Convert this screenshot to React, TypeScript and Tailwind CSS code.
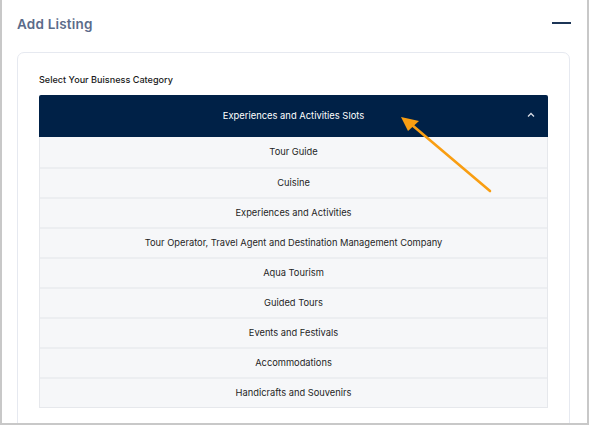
import React from "react";

const items = [
  "Tour Guide",
  "Cuisine",
  "Experiences and Activities",
  "Tour Operator, Travel Agent and Destination Management Company",
  "Aqua Tourism",
  "Guided Tours",
  "Events and Festivals",
  "Accommodations",
  "Handicrafts and Souvenirs",
];

export default function App() {
  return (
    <div
      className="relative w-[589px] h-[425px] bg-white border-l-2 border-r-2 border-b-2 border-[#c8c8c8] overflow-hidden"
      style={{ fontFamily: "Inter, 'Noto Sans', sans-serif" }}
    >
      <div className="flex items-center justify-between pl-[15px] pr-[16px] h-[46px]">
        <h1 className="text-[13.5px] font-semibold text-[#5b6b8a] tracking-[0.2px] mt-[2px]">Add Listing</h1>
        <div className="w-[19px] h-[2px] bg-[#1c3556] mt-[-1px]" />
      </div>
      <div className="ml-[15px] w-[553px] mt-[6px] h-[400px] border border-[#e6e9f0] rounded-[7px] px-[21px] pt-[20px]">
        <div className="text-[9.1px] font-medium text-[#1a1a1a] h-[22px]">Select Your Buisness Category</div>
        <div className="relative flex items-center justify-center h-[42px] bg-[#002147] rounded-t-[2px] text-white text-[9.4px]">
          Experiences and Activities Slots
          <svg className="absolute right-[13px] top-[17px]" width="8" height="6" viewBox="0 0 8 6">
            <path d="M1 4.5 L4 1.5 L7 4.5" stroke="#d7dce4" strokeWidth="1.3" fill="none" />
          </svg>
        </div>
        <div className="border-l border-r border-b border-[#e6e8ec]">
          {items.map((it, i) => (
            <div
              key={it}
              className={`flex items-center justify-center h-[30px] bg-[#f6f7f9] text-[9.3px] text-[#1f1f1f] ${i > 0 ? "border-t-2 border-[#eceef1]" : ""}`}
            >
              {it}
            </div>
          ))}
        </div>
      </div>
      <svg className="absolute left-0 top-0 pointer-events-none" width="589" height="425">
        <line x1="488" y1="191" x2="410" y2="125" stroke="#f99e12" strokeWidth="2.6" strokeLinecap="round" />
        <polygon points="399,117 417,121 406,131" fill="#f99e12" />
      </svg>
    </div>
  );
}
